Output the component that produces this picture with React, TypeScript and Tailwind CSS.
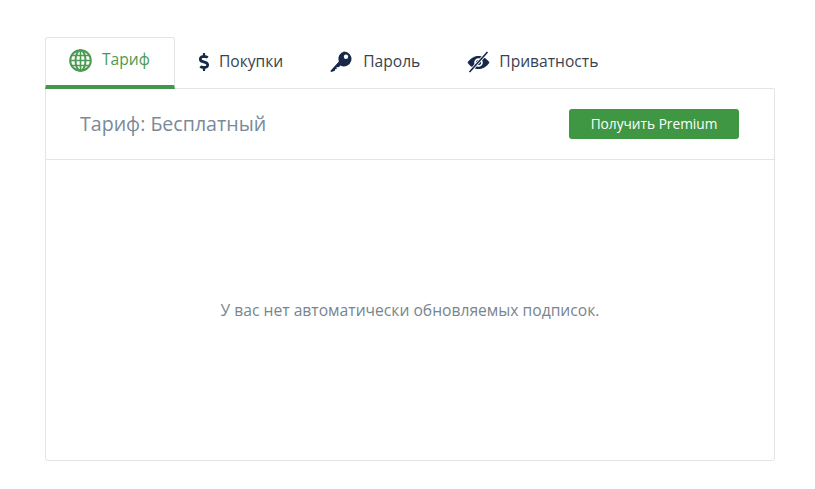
import { FaDollarSign } from 'react-icons/fa';

function GlobeIcon() {
  return (
    <svg viewBox="0 0 23 23" className="w-[23px] h-[23px]" fill="none" stroke="currentColor" strokeWidth="2">
      <circle cx="11.5" cy="11.5" r="10.3" />
      <ellipse cx="11.5" cy="11.5" rx="5" ry="10.3" />
      <path d="M11.5 1.2v20.6M1.2 11.5h20.6M2.8 6.5h17.4M2.8 16.5h17.4" strokeWidth="1.6" />
    </svg>
  );
}

function KeyIcon() {
  return (
    <svg viewBox="0 0 23 23" className="w-[23px] h-[23px]" fill="#16294a">
      <path fillRule="evenodd" d="M15 1.500a7.500 7.500 0 1 1-3.600 14.100L9.800 17.200 7.600 17l.1 2-1.600.2-.2 1.600-3.600 1.200-1-1 8.600-9.600A7.500 7.500 0 0 1 15 1.500Zm2 3a2.200 2.200 0 1 0 0 4.400 2.200 2.200 0 0 0 0-4.400Z" />
    </svg>
  );
}

function EyeIcon() {
  return (
    <svg viewBox="0 0 23 23" className="w-[23px] h-[23px]">
      <path fill="#16294a" fillRule="evenodd" d="M0.500 12.500C4 7.500 8 6 11.500 6s7.500 1.500 11 6.500c-3.500 5-7.500 6.500-11 6.500s-7.500-1.500-11-6.500Zm11-4.300a4.300 4.300 0 1 0 0 8.600 4.300 4.300 0 0 0 0-8.600Z" />
      <circle cx="11.500" cy="12.500" r="2.600" fill="#16294a" />
      <path d="M2.500 22 20.500 2" stroke="#ffffff" strokeWidth="3.200" />
      <path d="M2.500 22 20.500 2" stroke="#16294a" strokeWidth="1.600" />
    </svg>
  );
}

export default function App() {
  return (
    <div className="w-[815px] h-[489px] bg-white pt-[37px] pl-[45px] font-['Open_Sans',sans-serif]">
      <div className="w-[730px]">
        {/* Tabs */}
        <div className="flex h-[52px] relative z-10 text-[15.6px] text-[#36434f]">
          <div className="w-[130px] h-[52px] flex items-center gap-[10px] pl-[23px] pb-[3px] bg-white border border-[#e2e5e8] rounded-t-[3px] border-b-4 border-b-[#43964a] text-[#4b9a51]">
            <GlobeIcon />
            <span>Тариф</span>
          </div>
          <div className="flex items-center gap-[8px] pl-[22px] pr-[22px] pb-[3px]">
            <FaDollarSign className="w-[14px] h-[18px] text-[#16294a]" />
            <span>Покупки</span>
          </div>
          <div className="flex items-center gap-[11px] pl-[24px] pr-[23px] pb-[3px]">
            <KeyIcon />
            <span>Пароль</span>
          </div>
          <div className="flex items-center gap-[9px] pl-[24px] pb-[3px]">
            <EyeIcon />
            <span>Приватность</span>
          </div>
        </div>

        {/* Panel */}
        <div className="h-[373px] -mt-px border border-[#e2e5e8] rounded-b-[3px] flex flex-col">
          <div className="h-[71px] flex items-center justify-between pl-[34px] pr-[35px] border-b border-[#e2e5e8]">
            <span className="text-[19.6px] text-[#7a8a99]">Тариф: Бесплатный</span>
            <button className="w-[170px] h-[30px] rounded-[3px] bg-[#3f9643] text-white text-[13.7px]">
              Получить Premium
            </button>
          </div>
          <div className="flex-1 flex items-center justify-center pt-[1px] text-[15.65px] text-[#77858f]">
            У вас нет автоматически обновляемых подписок.
          </div>
        </div>
      </div>
    </div>
  );
}
